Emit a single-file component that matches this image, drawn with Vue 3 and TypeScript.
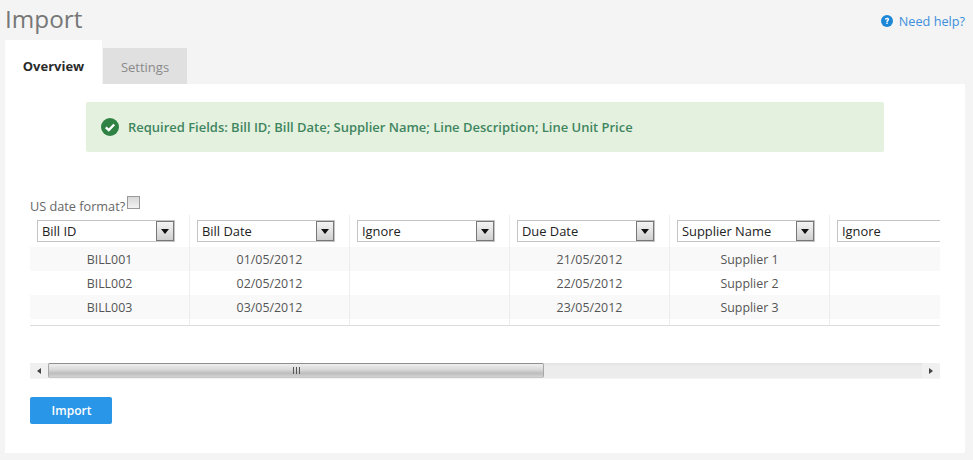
<template>
  <div class="page">
    <header class="top">
      <h1 class="title">Import</h1>
      <a class="help">
        <svg class="help-icon" viewBox="0 0 12 12" width="12" height="12">
          <circle cx="6" cy="6" r="6" fill="#1b87d6" />
          <path d="M3.900 4.600c0-1.200.9-1.900 2.200-1.900s2.100.7 2.100 1.700c0 1.400-1.500 1.300-1.500 2.500H5.300c0-1.600 1.300-1.500 1.300-2.400 0-.3-.2-.5-.6-.5-.4 0-.6.3-.6.7zM5.300 7.600h1.400V9H5.300z" fill="#fff" />
        </svg>
        Need help?
      </a>
    </header>

    <nav class="tabs">
      <div class="tab active">Overview</div>
      <div class="tab">Settings</div>
    </nav>

    <main class="panel">
      <div class="alert">
        <svg viewBox="0 0 18 18" width="18" height="18">
          <circle cx="9" cy="9" r="9" fill="#2f8144" />
          <path d="M4.800 9.300l3 2.800 5.400-5.600" fill="none" stroke="#fff" stroke-width="2.400" />
        </svg>
        <span>Required Fields: Bill ID; Bill Date; Supplier Name; Line Description; Line Unit Price</span>
      </div>

      <div class="date-opt">
        <span>US date format?</span>
        <span class="check"></span>
      </div>

      <div class="grid">
        <div v-for="(col, i) in columns" :key="i" class="col">
          <div class="head">
            <div class="select">
              <span>{{ col.label }}</span>
              <span class="arrow"><i></i></span>
            </div>
          </div>
          <div v-for="(cell, r) in col.cells" :key="r" class="cell" :class="{ odd: r % 2 === 0 }">{{ cell }}</div>
        </div>
      </div>

      <div class="scrollbar">
        <span class="step"><i class="left"></i></span>
        <div class="track">
          <div class="thumb"><span class="grip"></span></div>
        </div>
        <span class="step"><i class="right"></i></span>
      </div>

      <button class="btn" type="button">Import</button>
    </main>
  </div>
</template>

<script setup lang="ts">
interface Column { label: string; cells: string[] }

const empty = ['', '', '']
const columns: Column[] = [
  { label: 'Bill ID', cells: ['BILL001', 'BILL002', 'BILL003'] },
  { label: 'Bill Date', cells: ['01/05/2012', '02/05/2012', '03/05/2012'] },
  { label: 'Ignore', cells: empty },
  { label: 'Due Date', cells: ['21/05/2012', '22/05/2012', '23/05/2012'] },
  { label: 'Supplier Name', cells: ['Supplier 1', 'Supplier 2', 'Supplier 3'] },
  { label: 'Ignore', cells: empty },
]
</script>

<style>
html, body { margin: 0; background: #f4f4f4; }
</style>

<style scoped>
.page { height: 460px; box-sizing: border-box; padding: 0 8px 7px 5px; font-family: "Open Sans", sans-serif; color: #555; overflow: hidden; }
.top { display: flex; justify-content: space-between; height: 40px; }
.title { margin: 0; font-size: 24.300px; font-weight: 400; line-height: 37px; color: #777; }
.help { display: flex; align-items: center; gap: 6px; height: 42px; font-size: 12.700px; color: #3c8fdc; }
.tabs { display: flex; gap: 1px; align-items: flex-end; height: 44px; }
.tab { width: 84px; height: 36px; line-height: 38px; text-align: center; font-size: 13px; color: #8a8a8a; background: #e0e0e0; }
.tab.active { width: 97px; height: 44px; line-height: 52px; font-weight: 700; color: #2b2b2b; background: #fff; }
.panel { height: 369px; box-sizing: border-box; padding: 18px 25px 0; background: #fff; }
.alert { display: flex; align-items: center; gap: 9px; height: 50px; margin: 0 56px; padding-left: 15px; border-radius: 2px; background: #e4f1de; font-size: 12.970px; font-weight: 600; color: #3e8560; }
.date-opt { display: flex; align-items: flex-start; gap: 2px; height: 19px; margin-top: 44px; font-size: 12.700px; line-height: 20px; color: #666; }
.check { width: 11px; height: 11px; border: 1px solid #9a9a9a; background: linear-gradient(#d8d8d8, #f2f2f2); }
.grid { display: flex; height: 110px; overflow: hidden; border-bottom: 1px solid #ddd; }
.col { flex: 0 0 160px; box-sizing: border-box; border-right: 1px solid #ededed; }
.col:nth-child(6) { flex: 0 0 auto; width: 110px; border-right: 0; }
.head { height: 32px; padding: 5px 0 0 7px; box-sizing: border-box; }
.select { display: flex; justify-content: space-between; align-items: center; box-sizing: border-box; width: 138px; height: 22px; padding-left: 4px; border: 1px solid #c4c4c4; background: #fff; font-size: 12.900px; color: #222; }
.col:nth-child(6) .select { width: 120px; }
.col:nth-child(6) .arrow { display: none; }
.arrow { display: flex; align-items: center; justify-content: center; box-sizing: border-box; width: 18px; height: 20px; border: 1px solid #777; background: linear-gradient(#f4f4f4, #cfcfcf); }
.arrow i { border: 4.500px solid transparent; border-top: 5px solid #111; border-bottom: 0; }
.cell { height: 24px; line-height: 25px; text-align: center; font-size: 12.400px; color: #555; }
.cell.odd { background: #f9f9f9; }
.scrollbar { display: flex; height: 16px; margin-top: 37px; background: linear-gradient(#e2e2e2, #ececec 25%); border-bottom: 1px solid #f4f4f4; box-sizing: border-box; }
.step { flex: 0 0 18px; display: flex; align-items: center; justify-content: center; background: #f0f0f0; }
.step i { border: 3.500px solid transparent; }
.step .left { border-right: 4px solid #444; border-left: 0; }
.step .right { border-left: 4px solid #444; border-right: 0; }
.track { flex: 1; display: flex; }
.thumb { display: flex; align-items: center; justify-content: center; box-sizing: border-box; width: 496px; border: 1px solid #a8a8a8; border-top-color: #8e8e8e; border-bottom-color: #c8c8c8; border-radius: 2px; background: linear-gradient(#efefef, #d8d8d8 45%, #bdbdbd 70%, #d2d2d2); }
.grip { width: 7px; height: 7px; background: repeating-linear-gradient(90deg, #555 0 1px, transparent 1px 3px); }
.btn { display: block; width: 82px; height: 27px; margin-top: 18px; padding: 0 0 0 1px; border: 0; border-radius: 2px; background: #2a96e8; color: #fff; font-family: "Open Sans", sans-serif; font-size: 12px; font-weight: 600; }
</style>
